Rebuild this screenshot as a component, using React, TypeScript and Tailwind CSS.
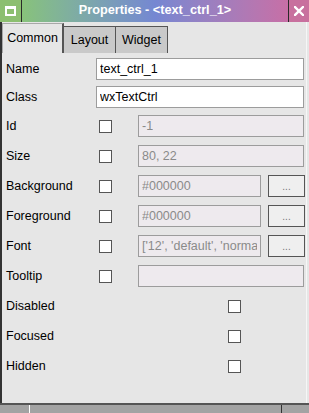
import React from 'react';

const Check: React.FC<{ className?: string }> = ({ className = '' }) => (
  <div className={`w-[13px] h-[13px] border border-[#555] bg-white shrink-0 ${className}`} />
);

const TextBox: React.FC<{ value: string; width: string; disabled?: boolean }> = ({ value, width, disabled }) => (
  <div
    className={`${width} h-[22px] border flex items-center px-[3px] overflow-hidden whitespace-nowrap shrink-0 ${
      disabled ? 'bg-[#eeeaee] border-[#9c9c9c] text-[#8a8a8a]' : 'bg-white border-[#9c9c9c] text-black'
    }`}
  >
    <span className="block overflow-hidden">{value}</span>
  </div>
);

const DotsButton: React.FC = () => (
  <div className="ml-[7px] w-[37px] h-[22px] border border-[#555] bg-[#efefef] flex items-center justify-center text-[10px] text-[#777] shrink-0">
    ...
  </div>
);

const Label: React.FC<{ text: string }> = ({ text }) => (
  <div className="w-[94px] pl-[4px] h-[22px] flex items-center shrink-0">{text}</div>
);

const App: React.FC = () => {
  const colorRows = ['Background', 'Foreground'];
  return (
    <div className="w-[309px] h-[413px] flex flex-col bg-[#e6e6e6] overflow-hidden font-['Liberation_Sans',Arial,sans-serif] text-[12.5px] text-black">
      {/* title bar */}
      <div className="h-[22px] flex shrink-0">
        <div className="w-[22px] bg-[#8cbf70] border-r border-[#2a2a2a] flex items-center justify-center">
          <div className="w-[11px] h-[10px] border-2 border-t-[3px] border-white" />
        </div>
        <div className="flex-1 bg-gradient-to-r from-[#88c27a] via-[#7587d2] to-[#c76fa6] flex items-center justify-center text-white font-bold text-[12.7px]">
          Properties - &lt;text_ctrl_1&gt;
        </div>
        <div className="w-[21px] bg-[#c8709e] border-l border-[#2a2a2a] flex items-center justify-center">
          <svg width="10" height="10" viewBox="0 0 10 10">
            <path d="M1 1 L9 9 M9 1 L1 9" stroke="white" strokeWidth="2.4" strokeLinecap="square" />
          </svg>
        </div>
      </div>

      {/* body */}
      <div className="flex-1 flex min-h-0">
        <div className="w-[2px] bg-[#333]" />
        <div className="flex-1 flex flex-col border-r border-[#f6f6f6]">
          {/* tabs */}
          <div className="h-[31px] flex items-end pt-[1px]">
            <div className="w-[62px] h-[30px] border-l border-t border-[#a8a8a8] border-r-2 border-r-[#555] flex items-center justify-center pb-[1px]">
              Common
            </div>
            <div className="w-[52px] h-[27px] bg-[#c9c9c9] border border-b-0 border-[#555] border-l-0 flex items-center justify-center">
              Layout
            </div>
            <div className="w-[52px] h-[27px] bg-[#c9c9c9] border border-b-0 border-[#555] border-l-0 flex items-center justify-center">
              Widget
            </div>
          </div>

          {/* form */}
          <div className="flex flex-col pt-[5px]">
            <div className="h-[28px] flex items-start">
              <Label text="Name" />
              <TextBox value="text_ctrl_1" width="w-[208px]" />
            </div>
            <div className="h-[29px] flex items-start">
              <Label text="Class" />
              <TextBox value="wxTextCtrl" width="w-[208px]" />
            </div>
            <div className="h-[30px] flex items-start">
              <Label text="Id" />
              <div className="h-[22px] flex items-center ml-[3px]">
                <Check />
              </div>
              <div className="ml-[26px]">
                <TextBox value="-1" width="w-[166px]" disabled />
              </div>
            </div>
            <div className="h-[30px] flex items-start">
              <Label text="Size" />
              <div className="h-[22px] flex items-center ml-[3px]">
                <Check />
              </div>
              <div className="ml-[26px]">
                <TextBox value="80, 22" width="w-[166px]" disabled />
              </div>
            </div>
            {colorRows.map((r) => (
              <div key={r} className="h-[30px] flex items-start">
                <Label text={r} />
                <div className="h-[22px] flex items-center ml-[3px]">
                  <Check />
                </div>
                <div className="ml-[26px] flex">
                  <TextBox value="#000000" width="w-[123px]" disabled />
                  <DotsButton />
                </div>
              </div>
            ))}
            <div className="h-[30px] flex items-start">
              <Label text="Font" />
              <div className="h-[22px] flex items-center ml-[3px]">
                <Check />
              </div>
              <div className="ml-[26px] flex">
                <TextBox value="['12', 'default', 'normal', 'normal', 0, '']" width="w-[123px]" disabled />
                <DotsButton />
              </div>
            </div>
            <div className="h-[30px] flex items-start">
              <Label text="Tooltip" />
              <div className="h-[22px] flex items-center ml-[3px]">
                <Check />
              </div>
              <div className="ml-[26px]">
                <TextBox value="" width="w-[166px]" disabled />
              </div>
            </div>
            {['Disabled', 'Focused', 'Hidden'].map((r) => (
              <div key={r} className="h-[30px] flex items-start">
                <Label text={r} />
                <div className="h-[22px] flex items-center ml-[132px]">
                  <Check />
                </div>
              </div>
            ))}
          </div>
        </div>
        <div className="w-[2px]" />
      </div>

      {/* bottom edge */}
      <div className="h-[2px] bg-[#555] shrink-0" />
      <div className="h-[8px] bg-[#a3a3a3] flex shrink-0">
        <div className="w-[29px]" />
        <div className="w-[1px] bg-white" />
        <div className="w-[251px]" />
        <div className="w-[1px] bg-[#333]" />
      </div>
    </div>
  );
};

export default App;
